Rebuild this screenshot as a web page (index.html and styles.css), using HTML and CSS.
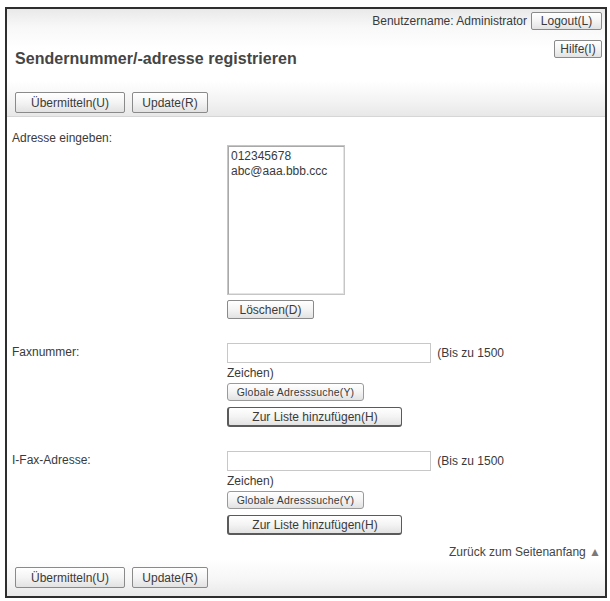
FILE: index.html
```html
<!DOCTYPE html>
<html lang="de">
<head>
<meta charset="utf-8">
<title>Sendernummer/-adresse registrieren</title>
<link rel="stylesheet" href="styles.css">
</head>
<body>
<div class="frame">
  <div class="head">
    <div class="topbar">
      <span class="user">Benutzername: Administrator</span>
      <button class="btn btn-logout" type="button">Logout(L)</button>
    </div>
    <div class="titlerow">
      <h1 class="title">Sendernummer/-adresse registrieren</h1>
      <button class="btn btn-help" type="button">Hilfe(I)</button>
    </div>
    <div class="toolbar">
      <button class="btn btn-submit" type="button">Übermitteln(U)</button>
      <button class="btn btn-update" type="button">Update(R)</button>
    </div>
  </div>

  <div class="content">
    <div class="row row-first">
      <div class="label">Adresse eingeben:</div>
      <div class="field field-list">
        <div class="listbox" role="listbox">
          <div class="opt">012345678</div>
          <div class="opt">abc@aaa.bbb.ccc</div>
        </div>
        <button class="btn btn-delete" type="button">Löschen(D)</button>
      </div>
    </div>

    <div class="row row-fax">
      <div class="label label-input">Faxnummer:</div>
      <div class="field">
        <p class="inputline"><input class="textin" type="text"> (Bis zu 1500 Zeichen)</p>
        <button class="btn btn-search" type="button">Globale Adresssuche(Y)</button>
        <button class="btn btn-add" type="button">Zur Liste hinzufügen(H)</button>
      </div>
    </div>

    <div class="row row-ifax">
      <div class="label label-input">I-Fax-Adresse:</div>
      <div class="field">
        <p class="inputline"><input class="textin" type="text"> (Bis zu 1500 Zeichen)</p>
        <button class="btn btn-search" type="button">Globale Adresssuche(Y)</button>
        <button class="btn btn-add" type="button">Zur Liste hinzufügen(H)</button>
      </div>
    </div>

    <div class="totop">Zurück zum Seitenanfang <span class="tri">▲</span></div>
  </div>

  <div class="footbar">
    <button class="btn btn-submit" type="button">Übermitteln(U)</button>
    <button class="btn btn-update" type="button">Update(R)</button>
  </div>
</div>
</body>
</html>
```

FILE: styles.css
```css
html, body {
  margin: 0;
  padding: 0;
  background: #ffffff;
}

body {
  font-family: "Liberation Sans", Arial, sans-serif;
  font-size: 12px;
  color: #3a3a3a;
}

.frame {
  margin: 7px 0 0 5px;
  width: 598px;
  border: 2px solid #2e2e2e;
  background: #ffffff;
}

.head {
  background: linear-gradient(to bottom, #e9e9e9 0px, #f8f8f8 18px, #ffffff 40px, #ffffff 72px, #f3f3f3 92px, #e8e8e8 107px);
  border-bottom: 1px solid #d6d6d6;
}

.topbar {
  display: flex;
  justify-content: flex-end;
  align-items: center;
  gap: 4px;
  height: 18px;
  padding: 3px 3px 0 0;
}

.user {
  font-size: 12px;
  color: #3a3a3a;
}

.titlerow {
  display: flex;
  justify-content: space-between;
  align-items: flex-start;
  padding: 0 3px 0 8px;
}

.title {
  margin: 19px 0 0 0;
  font-size: 16px;
  line-height: 20px;
  font-weight: bold;
  color: #454545;
  letter-spacing: 0.05px;
}

.toolbar {
  display: flex;
  gap: 7px;
  padding: 23px 8px 3px 8px;
}

.btn {
  font-family: "Liberation Sans", Arial, sans-serif;
  font-size: 12px;
  color: #3a3a3a;
  background: linear-gradient(to bottom, #ffffff 0%, #f4f4f4 50%, #e2e2e2 100%);
  border: 1px solid #8a8a8a;
  border-radius: 2px;
  padding: 0;
  margin: 0;
  text-align: center;
  box-sizing: border-box;
  line-height: 1;
  display: inline-flex;
  align-items: center;
  justify-content: center;
}

.btn-logout { width: 71px; height: 18px; }
.btn-help { width: 48px; height: 18px; margin-top: 10px; }
.btn-submit { width: 110px; height: 21px; }
.btn-update { width: 76px; height: 21px; }
.btn-delete { width: 87px; height: 19px; margin-top: 5px; }

.btn-search {
  width: 137px;
  height: 18px;
  font-size: 10.5px;
  letter-spacing: 0.2px;
  border-radius: 3px;
  border-color: #9a9a9a;
}

.btn-add {
  width: 175px;
  height: 20px;
  margin-top: 6px;
  border: 1px solid #5a5a5a;
  border-left-width: 2px;
  border-bottom-width: 2px;
  border-radius: 3px;
}

.content {
  padding: 0 4px 0 5px;
}

.row {
  display: grid;
  grid-template-columns: 215px 300px;
}

.row-first { margin-top: 14px; }
.row-fax { margin-top: 24px; }
.row-ifax { margin-top: 24px; }

.label {
  line-height: 14px;
  color: #3a3a3a;
}

.label-input {
  padding-top: 2px;
}

.field {
  display: flex;
  flex-direction: column;
  align-items: flex-start;
}

.field-list {
  padding-top: 14px;
}

.listbox {
  width: 118px;
  height: 150px;
  box-sizing: border-box;
  border: 1px solid #c6c6c6;
  box-shadow: inset 1px 1px 0 #a9a9a9, inset -1px -1px 0 #e4e4e4;
  padding: 3px 0 0 3px;
  background: #fff;
}

.opt {
  line-height: 15px;
  color: #3a3a3a;
  white-space: nowrap;
}

.inputline {
  margin: 0;
  line-height: 20px;
  color: #3a3a3a;
}

.textin {
  box-sizing: border-box;
  width: 204px;
  height: 20px;
  border: 1px solid #c8c8c8;
  margin: 0 3px 0 0;
  padding: 0 2px;
  vertical-align: top;
  font-family: "Liberation Sans", Arial, sans-serif;
  font-size: 12px;
  background: #fff;
}

.totop {
  margin-top: 10px;
  line-height: 14px;
  text-align: right;
  color: #444;
}

.tri {
  color: #7a7a7a;
  font-size: 12px;
}

.footbar {
  display: flex;
  gap: 7px;
  padding: 8px 8px 8px 8px;
  background: linear-gradient(to bottom, #ffffff 0%, #f6f6f6 55%, #e9e9e9 100%);
}
```
